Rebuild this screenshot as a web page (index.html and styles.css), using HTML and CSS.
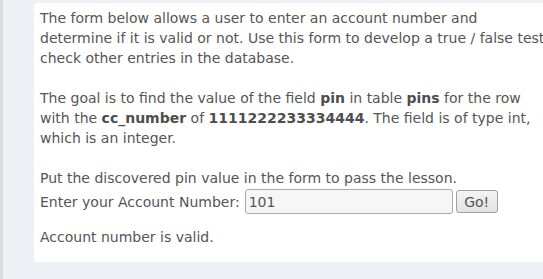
FILE: index.html
```html
<!DOCTYPE html>
<html>
<head>
<meta charset="utf-8">
<link rel="stylesheet" href="styles.css">
</head>
<body>
<div class="page">
  <div class="rail"></div>
  <div class="main">
    <div class="card">
      <p class="para">The form below allows a user to enter an account number and determine if it is valid or not. Use this form to develop a true / false test check other entries in the database.</p>
      <p class="para">The goal is to find the value of the field <b>pin</b> in table <b>pins</b> for the row with the <b>cc_number</b> of <b>1111222233334444</b>. The field is of type int, which is an integer.</p>
      <p class="para tight">Put the discovered pin value in the form to pass the lesson.</p>
      <form class="form-row">
        <label class="label" for="acct">Enter your Account Number:</label>
        <input class="field" id="acct" type="text" value="101">
        <button class="btn" type="button">Go!</button>
      </form>
      <p class="para result">Account number is valid.</p>
    </div>
  </div>
</div>
</body>
</html>
```
FILE: styles.css
```css
html, body {
  margin: 0;
  padding: 0;
}
body {
  background: #eff0f5;
  font-family: "DejaVu Sans", sans-serif;
  font-size: 14px;
  line-height: 20px;
  color: #555555;
  width: 543px;
  height: 279px;
  overflow: hidden;
}
.page {
  display: flex;
  height: 279px;
}
.rail {
  width: 3px;
  flex: none;
  background: #dcdcdc;
}
.main {
  flex: 1;
  min-width: 0;
  padding: 3px 0 0 31px;
}
.card {
  background: #ffffff;
  border-radius: 4px 0 0 4px;
  padding: 5px 6px 15px 6px;
  width: 510px;
}
.para {
  margin: 0 0 20px 0;
}
.para b {
  font-weight: bold;
  color: #4d4d4d;
}
.para.tight {
  margin-bottom: 0;
}
.para.result {
  margin: 0;
}
.form-row {
  display: flex;
  align-items: center;
  margin: 1px 0 13px 0;
  height: 25px;
}
.label {
  margin-right: 5px;
}
.field {
  box-sizing: border-box;
  width: 208px;
  height: 25px;
  margin: 0;
  padding: 0 3px;
  border: 1px solid #a9a9a9;
  border-radius: 3px;
  background: #f6f6f6;
  font-family: "DejaVu Sans", sans-serif;
  font-size: 14px;
  color: #555555;
}
.btn {
  box-sizing: border-box;
  width: 42px;
  height: 23px;
  margin: 0 0 0 3px;
  padding: 0;
  border: 1px solid #a0a0a0;
  border-radius: 3px;
  background: linear-gradient(#f4f4f4, #e2e2e2);
  font-family: "DejaVu Sans", sans-serif;
  font-size: 14px;
  color: #555555;
}
```
